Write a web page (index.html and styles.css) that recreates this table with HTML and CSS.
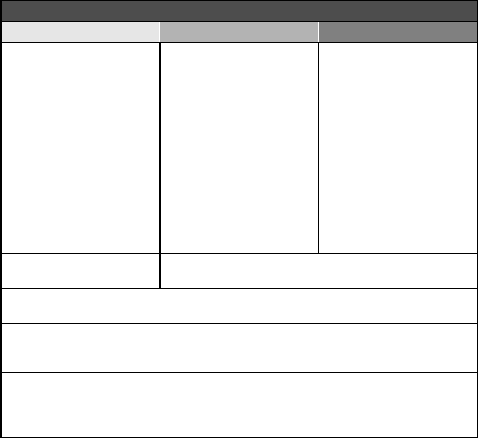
FILE: index.html
```html
<!DOCTYPE html>
<html lang="en">
<head>
    <meta charset="UTF-8">
    <meta name="viewport" content="width=device-width, initial-scale=1.0">
    <title>Layout</title>
    <link rel="stylesheet" href="styles.css">
</head>
<body>
    <div class="frame">
        <div class="titlebar"></div>
        <div class="tabs">
            <div class="tab tab-light"></div>
            <div class="tab tab-mid"></div>
            <div class="tab tab-dark"></div>
        </div>
        <div class="panes">
            <div class="pane pane-first"></div>
            <div class="pane pane-second"></div>
            <div class="pane pane-third"></div>
        </div>
        <div class="row row-split">
            <div class="cell cell-label"></div>
            <div class="cell cell-value"></div>
        </div>
        <div class="row row-short"></div>
        <div class="row row-medium"></div>
        <div class="row row-tall"></div>
    </div>
</body>
</html>
```

FILE: styles.css
```css
body {
  margin: 0;
  background: #fff;
  font-family: "Liberation Sans", Arial, sans-serif;
}

/* outer box - thicker line on the left */
.frame {
  width: 475px;
  height: 436px;
  border-style: solid;
  border-color: #000;
  border-width: 1px 1px 1px 2px;
  display: flex;
  flex-direction: column;
}

.titlebar {
  height: 20px;
  background: #4d4d4d;
  border-bottom: 1px solid #000;
}

/* tab strip, white gaps between tabs */
.tabs {
  display: grid;
  grid-template-columns: 157px 158px 158px;
  column-gap: 1px;
  height: 20px;
  background: #fff;
  border-bottom: 1px solid #000;
}
.tab-light { background: #e6e6e6; }
.tab-mid { background: #b3b3b3; }
.tab-dark { background: #808080; }

.panes {
  display: flex;
  height: 210px;
  border-bottom: 1px solid #000;
}
.pane-first {
  width: 157px;
  border-right: 2px solid #000;
}
.pane-second {
  width: 157px;
  border-right: 1px solid #000;
}
.pane-third {
  flex: 1;
}

.row {
  border-bottom: 1px solid #000;
}
.row-split {
  display: flex;
  height: 34px;
}
.cell-label {
  width: 157px;
  border-right: 2px solid #000;
}
.cell-value {
  flex: 1;
}
.row-short { height: 34px; }
.row-medium { height: 48px; }
.row-tall {
  flex: 1;
  border-bottom: none;
}
```
